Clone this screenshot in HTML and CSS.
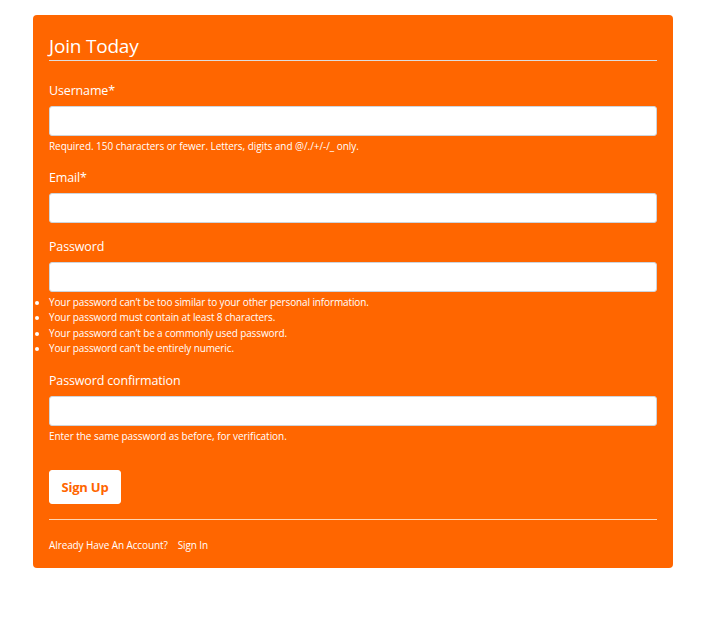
FILE: index.html
```html
<!DOCTYPE html>
<html lang="en">
<head>
<meta charset="utf-8">
<title>Join Today</title>
<link rel="stylesheet" href="styles.css">
</head>
<body>
<main class="page">
  <section class="card">
    <form class="form">
      <fieldset class="fieldset">
        <legend class="legend">Join Today</legend>
        <div class="group">
          <label class="label">Username*</label>
          <input class="input" type="text">
          <p class="help">Required. 150 characters or fewer. Letters, digits and @/./+/-/_ only.</p>
        </div>
        <div class="group">
          <label class="label">Email*</label>
          <input class="input" type="email">
        </div>
        <div class="group">
          <label class="label">Password</label>
          <input class="input" type="password">
          <ul class="rules">
            <li>Your password can’t be too similar to your other personal information.</li>
            <li>Your password must contain at least 8 characters.</li>
            <li>Your password can’t be a commonly used password.</li>
            <li>Your password can’t be entirely numeric.</li>
          </ul>
        </div>
        <div class="group">
          <label class="label">Password confirmation</label>
          <input class="input" type="password">
          <p class="help">Enter the same password as before, for verification.</p>
        </div>
      </fieldset>
      <div class="actions">
        <button class="btn" type="button">Sign Up</button>
      </div>
    </form>
    <div class="footer">
      <span class="muted">Already Have An Account?</span><a class="link" href="#">Sign In</a>
    </div>
  </section>
</main>
</body>
</html>
```
FILE: styles.css
```css
* { box-sizing: border-box; }
html, body { margin: 0; padding: 0; background: #fff; }
body {
  font-family: "Open Sans", "Noto Sans", "DejaVu Sans", sans-serif;
  color: #fff;
}
.page {
  padding: 15px 41px 0 33px;
}
.card {
  width: 640px;
  background: #ff6600;
  border-radius: 4px;
  padding: 16px 16px 15px 16px;
}
.form { margin: 0; }
.fieldset {
  border: 0;
  margin: 0;
  padding: 0;
  min-width: 0;
}
.legend {
  display: block;
  width: 100%;
  padding: 2px 0 1px 0;
  font-size: 19px;
  line-height: 26px;
  font-weight: 400;
  border-bottom: 1px solid #dddddd;
  margin-bottom: 19px;
  letter-spacing: -0.2px;
}
.group {
  margin-bottom: 13px;
}
.label {
  display: block;
  font-size: 12.5px;
  line-height: 21px;
  margin-bottom: 5px;
  letter-spacing: -0.15px;
}
.input {
  display: block;
  width: 100%;
  height: 30px;
  border: 1px solid #ced4da;
  border-radius: 3px;
  background: #fff;
  margin: 0;
  padding: 4px 8px;
}
.help {
  margin: 3px 0 0 0;
  font-size: 10px;
  line-height: 15px;
  letter-spacing: -0.05px;
}
.rules {
  margin: 3px 0 0 0;
  padding: 0;
  list-style: disc outside;
  font-size: 10px;
  line-height: 15.4px;
  letter-spacing: -0.12px;
}
.actions {
  margin-top: 13px;
  padding-bottom: 15px;
  border-bottom: 1px solid #ffd6b3;
}
.btn {
  display: block;
  width: 72px;
  height: 34px;
  background: #fff;
  color: #ff6600;
  border: 1px solid #fff;
  border-radius: 3px;
  font-family: inherit;
  font-size: 13px;
  font-weight: 700;
  letter-spacing: -0.2px;
  padding: 0;
}
.footer {
  padding-top: 18px;
  font-size: 10px;
  line-height: 15px;
  display: flex;
  gap: 10px;
  letter-spacing: -0.1px;
}
.link {
  color: #fff;
  text-decoration: none;
}
```
